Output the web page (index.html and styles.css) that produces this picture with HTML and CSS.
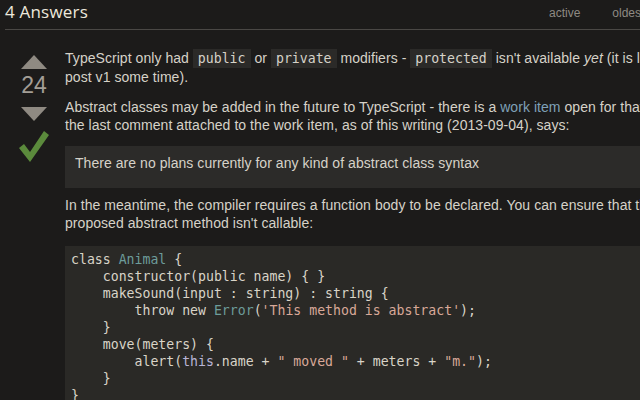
FILE: index.html
```html
<!DOCTYPE html>
<html>
<head>
<meta charset="utf-8">
<link rel="stylesheet" href="styles.css">
</head>
<body>
<div class="page">
  <div class="answers-header">
    <h2 class="title">4 Answers</h2>
    <div class="tabs">
      <a class="tab">active</a>
      <a class="tab">oldest</a>
      <a class="tab">votes</a>
    </div>
  </div>
  <div class="answer">
    <div class="votecell">
      <svg class="arrow" width="26" height="14" viewBox="0 0 26 14"><polygon points="0,14 13,0 26,14" fill="#8f8a82"/></svg>
      <div class="count">24</div>
      <svg class="arrow" width="26" height="14" viewBox="0 0 26 14"><polygon points="0,0 26,0 13,14" fill="#8f8a82"/></svg>
      <svg class="check" width="30" height="31" viewBox="0 0 30 31"><polygon points="0,17 5,13 11,21 25,0 30,4 11,31" fill="#5b8a3c"/></svg>
    </div>
    <div class="post">
      <p>TypeScript only had <code>public</code> or <code>private</code> modifiers - <code>protected</code> isn't available <em>yet</em> (it is likely to be added at some point<br>post v1 some time).</p>
      <p>Abstract classes may be added in the future to TypeScript - there is a <a class="link">work item</a> open for that, and<br>the last comment attached to the work item, as of this writing (2013-09-04), says:</p>
      <blockquote>There are no plans currently for any kind of abstract class syntax</blockquote>
      <p class="before-code">In the meantime, the compiler requires a function body to be declared. You can ensure that the<br>proposed abstract method isn't callable:</p>
<pre class="code">class <span class="t">Animal</span> {
    constructor(public name) { }
    makeSound(input : string) : string {
        throw new <span class="t">Error</span>(<span class="s">'This method is abstract'</span>);
    }
    move(meters) {
        alert(<span class="k">this</span>.name + <span class="s">" moved "</span> + meters + <span class="s">"m."</span>);
    }
}
</pre>
    </div>
  </div>
</div>
</body>
</html>
```
FILE: styles.css
```css
html, body {
  margin: 0;
  padding: 0;
  background: #1c1b1a;
  overflow: hidden;
}
.page {
  width: 900px;
  padding: 0 0 0 5px;
  font-family: "Liberation Sans", Arial, sans-serif;
  font-size: 14px;
  color: #d6d2c8;
}
.answers-header {
  display: flex;
  align-items: flex-end;
  border-bottom: 1px solid #4a4845;
  height: 29px;
}
.title {
  margin: 0 0 6px 0;
  font-family: "Open Sans", sans-serif;
  font-weight: normal;
  font-size: 17px;
  color: #ece8dc;
  letter-spacing: 0.2px;
}
.tabs {
  display: flex;
  gap: 32px;
  margin-left: 461px;
  padding-bottom: 9px;
}
.tab {
  font-size: 12px;
  color: #8e8a83;
}
.answer {
  display: flex;
  padding-top: 19px;
}
.votecell {
  width: 60px;
  flex-shrink: 0;
  display: flex;
  flex-direction: column;
  align-items: flex-start;
  padding-left: 16px;
  box-sizing: border-box;
  padding-top: 6px;
}
.arrow { display: block; }
.count {
  font-size: 23px;
  color: #a39e96;
  width: 26px;
  text-align: center;
  line-height: 25px;
  margin: 4px 0 9px 0;
}
.check {
  display: block;
  margin-top: 10px;
  margin-left: -2px;
}
.post {
  flex: 1;
  line-height: 18px;
  letter-spacing: 0.05px;
}
.post p {
  margin: 0 0 12px 0;
  white-space: nowrap;
}
.post p.before-code {
  margin-bottom: 14px;
}
code {
  font-family: "DejaVu Sans Mono", monospace;
  font-size: 13.2px;
  letter-spacing: 0;
  background: #2b2a28;
  padding: 2px 5px;
  color: #d6d2c8;
}
em { font-style: italic; }
.link { color: #7fa1b8; }
blockquote {
  margin: 0 0 8px 0;
  background: #2c2b29;
  padding: 8px 10px 16px 10px;
}
.code {
  margin: 0;
  background: #2a2926;
  padding: 5px 6px;
  font-family: "DejaVu Sans Mono", monospace;
  font-size: 13.2px;
  letter-spacing: 0;
  line-height: 17px;
  color: #d9d4c8;
}
.t { color: #6d9c9a; }
.s { color: #d8a898; }
.k { color: #b8b4d6; }
```
